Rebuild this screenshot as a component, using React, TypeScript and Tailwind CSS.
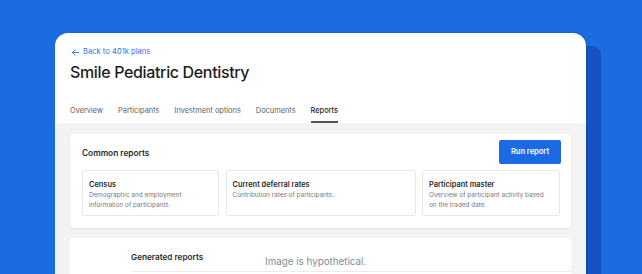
import React from "react";

export default function App() {
  return (
    <div
      className="w-[642px] h-[274px] overflow-hidden bg-[#1c6be1] pl-[55px] pt-[33px]"
      style={{ fontFamily: "Inter, 'Noto Sans', sans-serif" }}
    >
      <div className="relative w-[531px]">
        <div className="absolute left-[20px] right-[-15px] top-[13px] h-[400px] rounded-[9px] bg-[#1652c2]" />
        <div className="relative w-[531px] h-[300px] rounded-t-[13px] bg-white overflow-hidden shadow-[1px_0_2px_rgba(0,0,0,0.15)]">
          <div className="pl-[15px] pt-[14px]">
            <div className="flex items-center gap-[3px] text-[7.6px] text-[#2f77e6] leading-[10px] h-[10px] ml-[1px]">
              <svg width="9" height="9" viewBox="0 0 10 10" fill="none" stroke="#2f77e6" strokeWidth="1.1" strokeLinecap="round" strokeLinejoin="round">
                <path d="M8.5 5H1.5M4.5 2L1.5 5L4.5 8" />
              </svg>
              <span>Back to 401k plans</span>
            </div>
            <div className="mt-[4px] text-[16px] font-medium text-[#1d1d1d] leading-[22px] tracking-[-0.35px]">
              Smile Pediatric Dentistry
            </div>
            <div className="mt-[23px] flex gap-[15px] text-[7.4px] text-[#626262] leading-[10px]">
              <div className="pb-[6px]">Overview</div>
              <div className="pb-[6px]">Participants</div>
              <div className="pb-[6px]">Investment options</div>
              <div className="pb-[6px]">Documents</div>
              <div className="pb-[5px] border-b-[2px] border-[#555] text-[#2a2a2a] font-medium">Reports</div>
            </div>
          </div>
          <div className="bg-[#f3f3f3] px-[15px] pt-[11px] h-[200px]">
            <div className="bg-white rounded-[3px] px-[12px] pt-[6px] pb-[12px] shadow-[0_1px_2px_rgba(0,0,0,0.08)]">
              <div className="flex items-center justify-between h-[24px]">
                <div className="text-[8.3px] font-semibold text-[#2b2b2b] mt-[2px]">Common reports</div>
                <div className="w-[62px] h-[24px] rounded-[2px] bg-[#1b6ae3] text-white text-[7.5px] font-semibold flex items-center justify-center mr-[-2px]">
                  Run report
                </div>
              </div>
              <div className="mt-[6px] grid grid-cols-[137px_190px_138px] gap-x-[6.5px]">
                <div className="h-[46px] rounded-[2px] border border-[#e7e7e7] px-[6px] pt-[9px]">
                  <div className="text-[7.4px] font-semibold text-[#2b2b2b] leading-[10px]">Census</div>
                  <div className="text-[6.4px] text-[#7a7a7a] leading-[10px]">Demographic and employment information of participants.</div>
                </div>
                <div className="h-[46px] rounded-[2px] border border-[#e7e7e7] px-[6px] pt-[9px]">
                  <div className="text-[7.4px] font-semibold text-[#2b2b2b] leading-[10px]">Current deferral rates</div>
                  <div className="text-[6.4px] text-[#7a7a7a] leading-[10px]">Contribution rates of participants.</div>
                </div>
                <div className="h-[46px] rounded-[2px] border border-[#e7e7e7] px-[6px] pt-[9px]">
                  <div className="text-[7.4px] font-semibold text-[#2b2b2b] leading-[10px]">Participant master</div>
                  <div className="text-[6.4px] text-[#7a7a7a] leading-[10px] pr-[4px]">Overview of participant activity based on the traded date.</div>
                </div>
              </div>
            </div>
            <div className="mt-[10px] bg-white rounded-[3px] pl-[61px] pt-[13px] h-[60px]">
              <div className="flex items-end">
                <div className="text-[8.2px] font-semibold text-[#2b2b2b] leading-[12px] w-[134px] pb-[5px]">Generated reports</div>
                <div className="text-[9.8px] text-[#7c8e92] leading-[13px]">Image is hypothetical.</div>
              </div>
              <div className="mt-[3px] h-[1px] bg-[#ececec]" />
            </div>
          </div>
        </div>
      </div>
    </div>
  );
}
